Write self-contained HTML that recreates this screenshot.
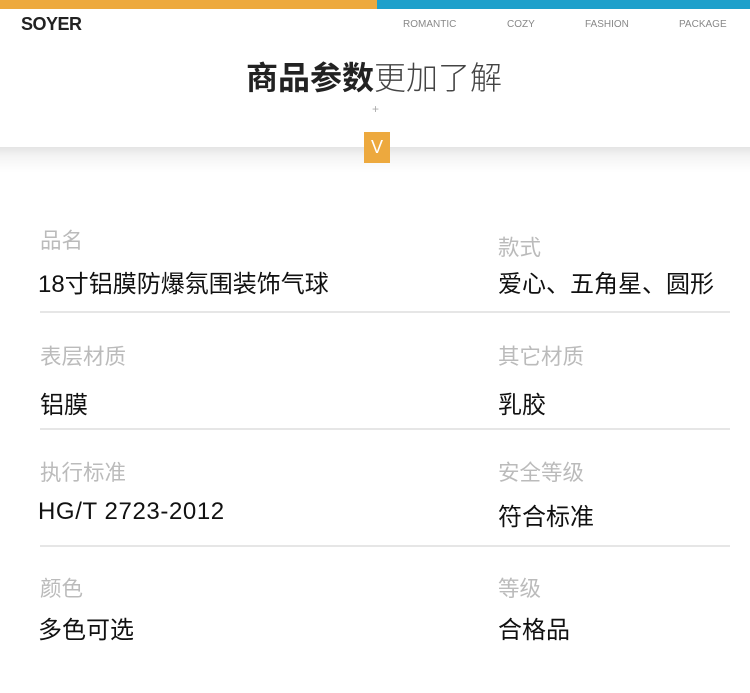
<!DOCTYPE html>
<html><head><meta charset="utf-8"><style>
*{margin:0;padding:0}
body{width:750px;height:693px;background:#fff;position:relative;overflow:hidden;font-family:"Liberation Sans","Noto Sans CJK SC",sans-serif}
.a{position:absolute;white-space:nowrap}
.nav{font-size:10px;color:#888;top:19px}
.lab{font-size:21.5px;color:#bbb}
.val{font-size:24px;color:#111}
.ln{position:absolute;left:40px;width:690px;height:2px;background:#e6e6e6}
</style></head><body>
<div class="a" style="left:0;top:0;width:377px;height:9px;background:#eda93e"></div>
<div class="a" style="left:377px;top:0;width:373px;height:9px;background:#1ea0cb"></div>
<div class="a" style="left:21px;top:14px;font-size:18px;font-weight:bold;color:#222;letter-spacing:-0.5px">SOYER</div>
<div class="a nav" style="left:403px">ROMANTIC</div>
<div class="a nav" style="left:507px">COZY</div>
<div class="a nav" style="left:585px">FASHION</div>
<div class="a nav" style="left:679px">PACKAGE</div>
<div class="a" style="left:246px;top:53px;font-size:32px;color:#222"><b>商品参数</b><span style="font-weight:300;color:#444">更加了解</span></div>
<div class="a" style="left:372px;top:102px;font-size:12px;color:#aaa">+</div>
<div class="a" style="left:0;top:147px;width:750px;height:26px;background:linear-gradient(#e4e4e4,#f4f4f4 35%,rgba(255,255,255,0))"></div>
<div class="a" style="left:364px;top:132px;width:26px;height:31px;background:#eda93e;color:#fff;font-size:18px;text-align:center;line-height:31px">V</div>

<div class="a lab" style="left:40px;top:224px">品名</div>
<div class="a lab" style="left:498px;top:231px">款式</div>
<div class="a val" style="left:38px;top:264px">18寸铝膜防爆氛围装饰气球</div>
<div class="a val" style="left:498px;top:264px">爱心、五角星、圆形</div>
<div class="ln" style="top:311px"></div>

<div class="a lab" style="left:40px;top:340px">表层材质</div>
<div class="a lab" style="left:498px;top:340px">其它材质</div>
<div class="a val" style="left:40px;top:385px">铝膜</div>
<div class="a val" style="left:498px;top:385px">乳胶</div>
<div class="ln" style="top:428px"></div>

<div class="a lab" style="left:40px;top:456px">执行标准</div>
<div class="a lab" style="left:498px;top:456px">安全等级</div>
<div class="a val" style="left:38px;top:498px;letter-spacing:0.6px">HG/T 2723-2012</div>
<div class="a val" style="left:498px;top:497px">符合标准</div>
<div class="ln" style="top:545px"></div>

<div class="a lab" style="left:40px;top:572px">颜色</div>
<div class="a lab" style="left:498px;top:572px">等级</div>
<div class="a val" style="left:38px;top:610px">多色可选</div>
<div class="a val" style="left:498px;top:610px">合格品</div>
</body></html>
